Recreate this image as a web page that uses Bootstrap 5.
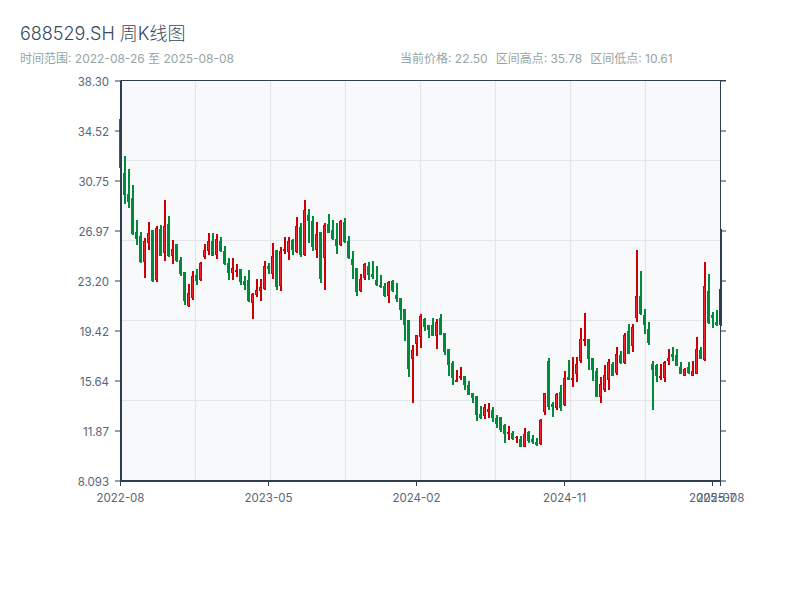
<!DOCTYPE html>
<html lang="zh">
<head>
<meta charset="utf-8">
<title>688529.SH 周K线图</title>
<link rel="stylesheet" href="https://cdn.jsdelivr.net/npm/bootstrap@5.3.0/dist/css/bootstrap.min.css">
<style>
body { background:#fff; font-family:Inter,"Noto Sans CJK SC",sans-serif; color:#34495e; }
.page-wrap { padding:20px 20px 0; }
.chart-title { font-size:18px; line-height:28px; font-weight:300; color:#34495e; margin:0 0 2px; }
.meta-text { font-size:12px; line-height:18px; color:#95a5a6; }
.meta-text .col-6 { padding:0; }
.chart-box { display:block; width:800px; height:520px; margin:2px 0 0 -20px; }
.chart-box text { font-family:Inter,"Noto Sans CJK SC",sans-serif; font-size:11.5px; fill:#566676; }
.grid-line { stroke:#e2e5ea; stroke-width:1.2; }
.axis-line { stroke:#2c3e50; stroke-width:1; }
.axis-thick { stroke:#2c3e50; stroke-width:2; }
</style>
</head>
<body>
<div class="page-wrap">
  <h1 class="chart-title">688529.SH 周K线图</h1>
  <div class="row g-0 meta-text">
    <div class="col-6">时间范围: 2022-08-26 至 2025-08-08</div>
    <div class="col-6 d-flex gap-2">
      <span>当前价格: 22.50</span><span>区间高点: 35.78</span><span>区间低点: 10.61</span>
    </div>
  </div>
  <svg class="chart-box" id="chart" viewBox="0 70 800 520" xmlns="http://www.w3.org/2000/svg">
    <rect x="121" y="81" width="599" height="400" fill="#f8f9fb"/>
    <g id="grid"></g>
    <g id="candles" shape-rendering="crispEdges"></g>
    <g id="axes"></g>
    <g text-anchor="end">
      <text x="109" y="86">38.30</text><text x="109" y="136">34.52</text><text x="109" y="186">30.75</text>
      <text x="109" y="236">26.97</text><text x="109" y="286">23.20</text><text x="109" y="336">19.42</text>
      <text x="109" y="386">15.64</text><text x="109" y="436">11.87</text><text x="109" y="486">8.093</text>
    </g>
    <g text-anchor="middle">
      <text x="120.5" y="502">2022-08</text><text x="268.5" y="502">2023-05</text><text x="416.5" y="502">2024-02</text>
      <text x="564.5" y="502">2024-11</text><text x="712.5" y="502">2025-07</text><text x="720.5" y="502">2025-08</text>
    </g>
  </svg>
</div>
<script>
// [colour, wick top, wick bottom, body top, body bottom], one row per week
var weeks = "g119,168,119,168;g156,204,173,195;g169,208,194,202;g185,235,198,234;g220,245,232,239;g232,263,236,262;r238,278,241,262;r222,250,233,243;g230,282,230,281;r226,282,228,280;g225,256,229,256;r200,261,226,253;g216,257,224,256;r240,264,249,256;g244,262,244,261;g257,276,260,274;g272,305,272,301;r284,307,293,306;r271,300,276,298;g269,285,275,281;r262,281,263,280;r244,259,250,257;r233,255,241,251;g233,256,241,256;r234,259,239,255;g237,252,241,251;g246,265,251,264;g258,280,263,273;r258,280,268,273;r264,277,270,272;g269,285,269,282;g276,290,281,285;g270,302,280,301;r293,319,294,303;r279,297,290,295;r279,301,287,291;r261,290,266,289;g263,274,266,269;r243,279,256,274;g250,290,250,287;r247,291,251,286;r237,254,249,251;r237,260,241,252;g239,255,240,250;r217,253,226,252;g223,257,227,255;r200,256,210,255;g209,243,215,221;g216,251,221,247;r222,258,234,250;g232,283,232,279;r223,290,225,258;g214,233,224,233;g220,240,230,239;g223,254,239,246;r220,246,221,245;g218,243,222,242;g236,259,241,258;g251,279,259,265;g268,296,268,292;r274,292,279,291;r263,280,264,278;g262,280,266,275;g261,279,274,277;g266,286,280,285;g275,288,285,287;g283,297,286,296;r281,303,282,296;g280,292,281,291;g283,302,295,299;g298,320,298,310;g309,341,309,325;g320,377,320,369;r345,403,350,359;r335,356,335,344;r314,348,316,337;g318,331,319,327;g325,338,325,330;g318,336,325,336;r319,349,322,336;g314,335,318,335;g333,355,333,352;g349,376,349,365;g361,385,363,378;r370,382,380,382;r367,380,376,378;g376,390,376,385;g381,395,385,395;g393,403,393,398;g396,421,396,415;g406,419,414,418;r404,419,407,416;r403,418,409,412;g407,422,410,418;g415,428,418,424;g417,432,417,430;g424,443,425,434;r426,440,432,434;g431,440,433,439;r436,443,437,438;g436,447,439,447;r428,447,434,447;g431,443,432,441;g435,444,439,442;g438,446,442,445;r419,445,420,444;r393,415,393,412;g358,410,361,407;g402,417,404,407;r393,410,394,408;g385,411,392,408;r371,406,378,405;g360,380,377,380;r357,387,378,380;r357,382,364,374;r328,363,339,361;r313,346,339,341;g339,370,339,359;g358,381,358,370;g368,397,371,397;r377,403,384,397;r365,392,375,390;r359,390,362,380;g362,376,364,376;r347,375,354,373;g351,364,355,363;r333,364,335,363;g324,354,331,354;r324,352,327,346;r250,322,296,318;g271,315,296,314;g309,334,315,325;g322,345,329,343;g361,410,364,370;g364,382,365,376;r364,380,376,378;r361,382,362,378;r349,365,358,361;g347,361,354,357;g349,366,355,366;g362,374,367,374;r368,376,369,376;g362,374,367,373;r361,376,371,376;r337,374,349,374;g347,359,350,359;r262,361,286,360;g274,324,291,323;g312,328,315,318;g310,326,322,325;r229,326,289,325".split(";");
var NS = "http://www.w3.org/2000/svg";
function add(parent, tag, attrs) {
  var el = document.createElementNS(NS, tag);
  for (var k in attrs) el.setAttribute(k, attrs[k]);
  document.getElementById(parent).appendChild(el);
}
[195.5,270.5,345.5,420.5,495.5,570.5,645.5].forEach(function (x) {
  add("grid","line",{x1:x,x2:x,y1:81,y2:481,"class":"grid-line"});
});
[160.5,240.5,320.5,400.5].forEach(function (y) {
  add("grid","line",{x1:121,x2:720,y1:y,y2:y,"class":"grid-line"});
});
weeks.forEach(function (w, i) {
  var red = w[0] === "r", v = w.slice(1).split(",").map(Number);
  var dark = red ? "#cc0000" : "#008a3c";
  add("candles","rect",{x:120+4*i,y:v[0],width:2,height:v[1]-v[0],fill:dark});
  add("candles","rect",{x:119+4*i,y:v[2],width:3,height:Math.max(v[3]-v[2],1),fill:dark});
  if (red && v[3]-v[2] > 2) {
    add("candles","rect",{x:120+4*i,y:v[2]+1,width:1,height:v[3]-v[2]-2,fill:"#f5222a"});
  }
});
for (var y = 81; y <= 481; y += 50) {
  add("axes","line",{x1:115,x2:121,y1:y,y2:y,"class":"axis-line"});
  add("axes","line",{x1:720,x2:726,y1:y,y2:y,"class":"axis-line"});
}
[120.5,268.5,416.5,564.5,712.5,720.5].forEach(function (x) {
  add("axes","line",{x1:x,x2:x,y1:481,y2:486,"class":"axis-line"});
});
add("axes","line",{x1:121,x2:121,y1:80.5,y2:482,"class":"axis-thick"});
add("axes","line",{x1:720.5,x2:720.5,y1:81,y2:482,"class":"axis-line"});
add("axes","line",{x1:121,x2:726,y1:80.5,y2:80.5,"class":"axis-line"});
add("axes","line",{x1:120,x2:721,y1:481,y2:481,"class":"axis-thick"});
</script>
<script src="https://cdn.jsdelivr.net/npm/bootstrap@5.3.0/dist/js/bootstrap.bundle.min.js"></script>
</body>
</html>
